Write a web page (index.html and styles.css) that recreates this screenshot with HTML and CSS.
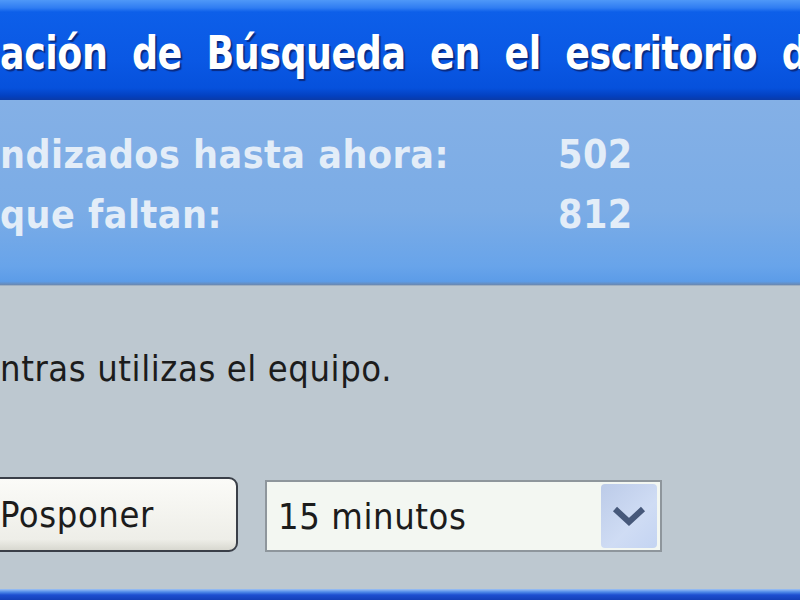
FILE: index.html
```html
<html>
<head>
    <title>Indización de Búsqueda</title>
    <link rel="stylesheet" href="styles.css">
</head>
<body>
    <div class="dialog">
        <div class="titlebar">
            <span class="title">ación de Búsqueda en el escritorio d</span>
        </div>

        <div class="stats">
            <div class="stat-row">
                <span class="stat-label">ndizados hasta ahora:</span>
                <span class="stat-value">502</span>
            </div>
            <div class="stat-row">
                <span class="stat-label">que faltan:</span>
                <span class="stat-value">812</span>
            </div>
        </div>

        <div class="content">
            <p class="message">ntras utilizas el equipo.</p>

            <div class="controls">
                <button class="postpone">Posponer</button>
                <div class="dropdown">
                    <span class="dropdown-text">15 minutos</span>
                    <span class="dropdown-button">
                        <svg width="38" height="26" viewBox="0 0 38 26">
                            <path d="M5 6 L19 19 L33 6" fill="none" stroke="#46587a" stroke-width="6"/>
                        </svg>
                    </span>
                </div>
            </div>
        </div>

        <div class="footer"></div>
    </div>
</body>
</html>
```

FILE: styles.css
```css
body {
    margin: 0;
    padding: 0;
    background-color: #bcc7cf;
    font-family: "DejaVu Sans Condensed", "DejaVu Sans", sans-serif;
}

.dialog {
    width: 800px;
    height: 600px;
    display: flex;
    flex-direction: column;
    overflow: hidden;
}

/* XP style caption */
.titlebar {
    height: 100px;
    box-sizing: border-box;
    padding-top: 8px;
    background: linear-gradient(to bottom, #4f98f8 0px, #2f7cf2 8px, #0d5fe9 12px, #0a58e4 60px, #0651dc 88px, #0340c0 96px, #0a3aa8 100px);
    display: flex;
    align-items: center;
    white-space: nowrap;
    overflow: hidden;
}

.title {
    color: #fff;
    font-weight: bold;
    font-size: 46px;
    letter-spacing: -0.5px;
    word-spacing: 14px;
    text-shadow: 2px 2px 1px #0a2a80;
    margin-top: -2px;
    transform: scaleX(0.88);
    transform-origin: left center;
}

.stats {
    height: 185px;
    box-sizing: border-box;
    padding-top: 24px;
    background: linear-gradient(to bottom, #84b0e6 0%, #7bace6 60%, #68a4ea 90%, #5c9ce8 98%, #6a88b0 100%);
}

.stat-row {
    display: flex;
    height: 60px;
    align-items: center;
    color: #e3edf8;
    font-weight: bold;
    font-size: 39px;
    letter-spacing: 0.5px;
    white-space: nowrap;
}

.stat-label {
    width: 558px;
}

.content {
    flex: 1;
    background-color: #bdc8d0;
    border-top: 1px solid #9fb0c2;
    padding-top: 62px;
}

.message {
    margin: 0;
    color: #1c1c1c;
    font-size: 36px;
    letter-spacing: 0.6px;
    white-space: nowrap;
}

.controls {
    display: flex;
    align-items: center;
    margin-top: 87px;
}

.postpone {
    width: 250px;
    height: 75px;
    margin-left: -12px;
    padding: 0 0 0 10px;
    text-align: left;
    font-family: inherit;
    font-size: 36px;
    letter-spacing: 0.6px;
    color: #1c1c1c;
    background: linear-gradient(to bottom, #fbfbf8, #eeeee8 85%, #d8d8d0);
    border: 2px solid #3a3f48;
    border-radius: 9px;
}

.dropdown {
    width: 397px;
    height: 72px;
    box-sizing: border-box;
    margin-left: 27px;
    margin-top: 4px;
    display: flex;
    align-items: center;
    justify-content: space-between;
    background-color: #f3f7f2;
    border: 2px solid #8e969c;
    padding: 2px 3px 2px 11px;
}

.dropdown-text {
    font-size: 36px;
    letter-spacing: 0.6px;
    color: #1c1c1c;
}

.dropdown-button {
    width: 56px;
    height: 64px;
    display: flex;
    align-items: center;
    justify-content: center;
    background: linear-gradient(135deg, #bccbe8, #cfdcf4 60%, #c4d4f2);
    border-radius: 4px;
}

.footer {
    height: 11px;
    background: linear-gradient(to bottom, #9ec2f4 0px, #4f8ae8 3px, #1d4fd0 6px, #1440b8 11px);
}
```
